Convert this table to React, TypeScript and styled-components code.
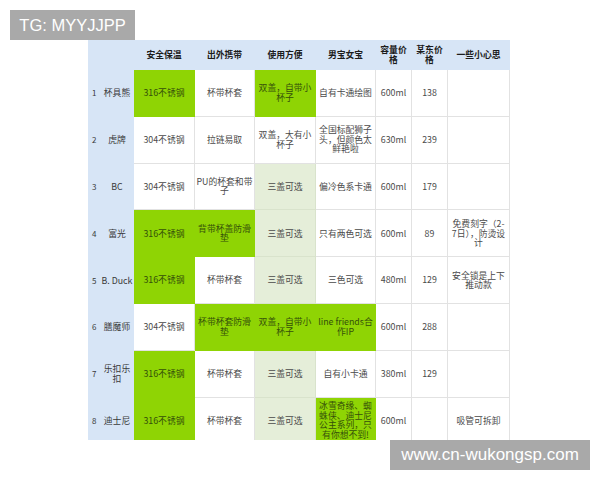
import React, { FC } from "react"
import styled, { createGlobalStyle } from "styled-components"

const GlobalStyle = createGlobalStyle`
  html, body {
    margin: 0;
    padding: 0;
    background: #ffffff;
  }
`

type Tone = "plain" | "green" | "light"

interface CellData {
  text: string
  tone?: Tone
}

interface RowData {
  no: string
  name: string
  cells: CellData[]
}

const headers = ["安全保温", "出外携带", "使用方便", "男宝女宝", "容量价格", "某东价格", "一些小心思"]

const rows: RowData[] = [
  {
    no: "1",
    name: "杯具熊",
    cells: [
      { text: "316不锈钢", tone: "green" },
      { text: "杯带杯套" },
      { text: "双盖，自带小杯子", tone: "green" },
      { text: "自有卡通绘图" },
      { text: "600ml" },
      { text: "138" },
      { text: "" },
    ],
  },
  {
    no: "2",
    name: "虎牌",
    cells: [
      { text: "304不锈钢" },
      { text: "拉链易取" },
      { text: "双盖，大有小杯子" },
      { text: "全国标配狮子头，但颜色太鲜艳啦" },
      { text: "630ml" },
      { text: "239" },
      { text: "" },
    ],
  },
  {
    no: "3",
    name: "BC",
    cells: [
      { text: "304不锈钢" },
      { text: "PU的杯套和带子" },
      { text: "三盖可选", tone: "light" },
      { text: "偏冷色系卡通" },
      { text: "600ml" },
      { text: "179" },
      { text: "" },
    ],
  },
  {
    no: "4",
    name: "富光",
    cells: [
      { text: "316不锈钢", tone: "green" },
      { text: "背带杯盖防滑垫", tone: "green" },
      { text: "三盖可选", tone: "light" },
      { text: "只有两色可选" },
      { text: "600ml" },
      { text: "89" },
      { text: "免费刻字（2-\n7日），防烫设\n计" },
    ],
  },
  {
    no: "5",
    name: "B. Duck",
    cells: [
      { text: "316不锈钢", tone: "green" },
      { text: "杯带杯套" },
      { text: "三盖可选", tone: "light" },
      { text: "三色可选" },
      { text: "480ml" },
      { text: "129" },
      { text: "安全锁是上下推动款" },
    ],
  },
  {
    no: "6",
    name: "膳魔师",
    cells: [
      { text: "304不锈钢" },
      { text: "杯带杯套防滑垫", tone: "green" },
      { text: "双盖，自带小杯子", tone: "green" },
      { text: "line friends合作IP", tone: "green" },
      { text: "600ml" },
      { text: "288" },
      { text: "" },
    ],
  },
  {
    no: "7",
    name: "乐扣乐\n扣",
    cells: [
      { text: "316不锈钢", tone: "green" },
      { text: "杯带杯套" },
      { text: "三盖可选", tone: "light" },
      { text: "自有小卡通" },
      { text: "380ml" },
      { text: "129" },
      { text: "" },
    ],
  },
  {
    no: "8",
    name: "迪士尼",
    cells: [
      { text: "316不锈钢", tone: "green" },
      { text: "杯带杯套" },
      { text: "三盖可选", tone: "light" },
      { text: "冰雪奇缘、蜘蛛侠、迪士尼公主系列，只有你想不到!", tone: "green" },
      { text: "600ml" },
      { text: "" },
      { text: "吸管可拆卸" },
    ],
  },
]

const toneBg: Record<Tone, string> = {
  plain: "#ffffff",
  green: "#8fd404",
  light: "#e5eed9",
}

const toneLine: Record<Tone, string> = {
  plain: "#e2e2e2",
  green: "#8fd404",
  light: "#d9e3cc",
}

const toneText: Record<Tone, string> = {
  plain: "#4a4a4a",
  green: "#35500a",
  light: "#4a4a4a",
}

const Page = styled.div`
  position: relative;
  width: 600px;
  height: 480px;
  padding: 40px 0 0 88px;
  box-sizing: border-box;
  font-family: "Noto Sans CJK SC", "Noto Sans", sans-serif;
`

const Frame = styled.div`
  width: 422px;
  height: 400px;
  overflow: hidden;
  background: #d7e5f6;
`

const Table = styled.div`
  display: grid;
  grid-template-columns: 46px 61px 60px 61px 60px 36px 36px 62px;
  grid-template-rows: 30px repeat(8, 46.8px);
`

const HeadCell = styled.div`
  display: flex;
  align-items: center;
  justify-content: center;
  padding: 0 2px;
  text-align: center;
  font-size: 8.8px;
  line-height: 10px;
  font-weight: 700;
  color: #1c1c1c;
  background: #d7e5f6;
  border-right: 1px solid #d7e5f6;
  box-sizing: border-box;

  &:last-child {
    border-right-color: #e2e2e2;
  }
`

const NameCell = styled.div`
  display: flex;
  align-items: center;
  padding: 0 1px 0 4px;
  background: #d7e5f6;
  color: #3a3a3a;
  font-size: 8.8px;
  line-height: 10px;
`

const No = styled.span`
  width: 9px;
  flex-shrink: 0;
  font-size: 8px;
`

const Name = styled.span`
  flex: 1;
  text-align: center;
  white-space: pre;
`

const Cell = styled.div<{ $tone: Tone }>`
  display: flex;
  align-items: center;
  justify-content: center;
  padding: 0 1px;
  text-align: center;
  white-space: pre-line;
  font-size: 8.8px;
  line-height: 9.5px;
  box-sizing: border-box;
  background: ${(p) => toneBg[p.$tone]};
  color: ${(p) => toneText[p.$tone]};
  border-right: 1px solid ${(p) => toneLine[p.$tone]};
  border-bottom: 1px solid ${(p) => toneLine[p.$tone]};
  overflow: hidden;
`

const Mark = styled.div`
  position: absolute;
  background: #a9a9a9;
  color: #ffffff;
  font-family: "Liberation Sans", Arial, sans-serif;
  display: flex;
  align-items: center;
  justify-content: center;
  height: 30px;
  white-space: nowrap;
`

const TopMark = styled(Mark)`
  left: 10px;
  top: 10px;
  width: 125px;
  font-size: 16.5px;
`

const BottomMark = styled(Mark)`
  left: 390px;
  top: 440px;
  width: 200px;
  font-size: 17px;
`

const App: FC = () => {
  return (
    <Page>
      <GlobalStyle />
      <Frame>
        <Table>
          <HeadCell />
          {headers.map((h) => (
            <HeadCell key={h}>{h}</HeadCell>
          ))}
          {rows.map((row) => (
            <React.Fragment key={row.no}>
              <NameCell>
                <No>{row.no}</No>
                <Name>{row.name}</Name>
              </NameCell>
              {row.cells.map((c, i) => (
                <Cell key={i} $tone={c.tone ?? "plain"}>
                  {c.text}
                </Cell>
              ))}
            </React.Fragment>
          ))}
        </Table>
      </Frame>
      <TopMark>TG: MYYJJPP</TopMark>
      <BottomMark>www.cn-wukongsp.com</BottomMark>
    </Page>
  )
}

export default App
